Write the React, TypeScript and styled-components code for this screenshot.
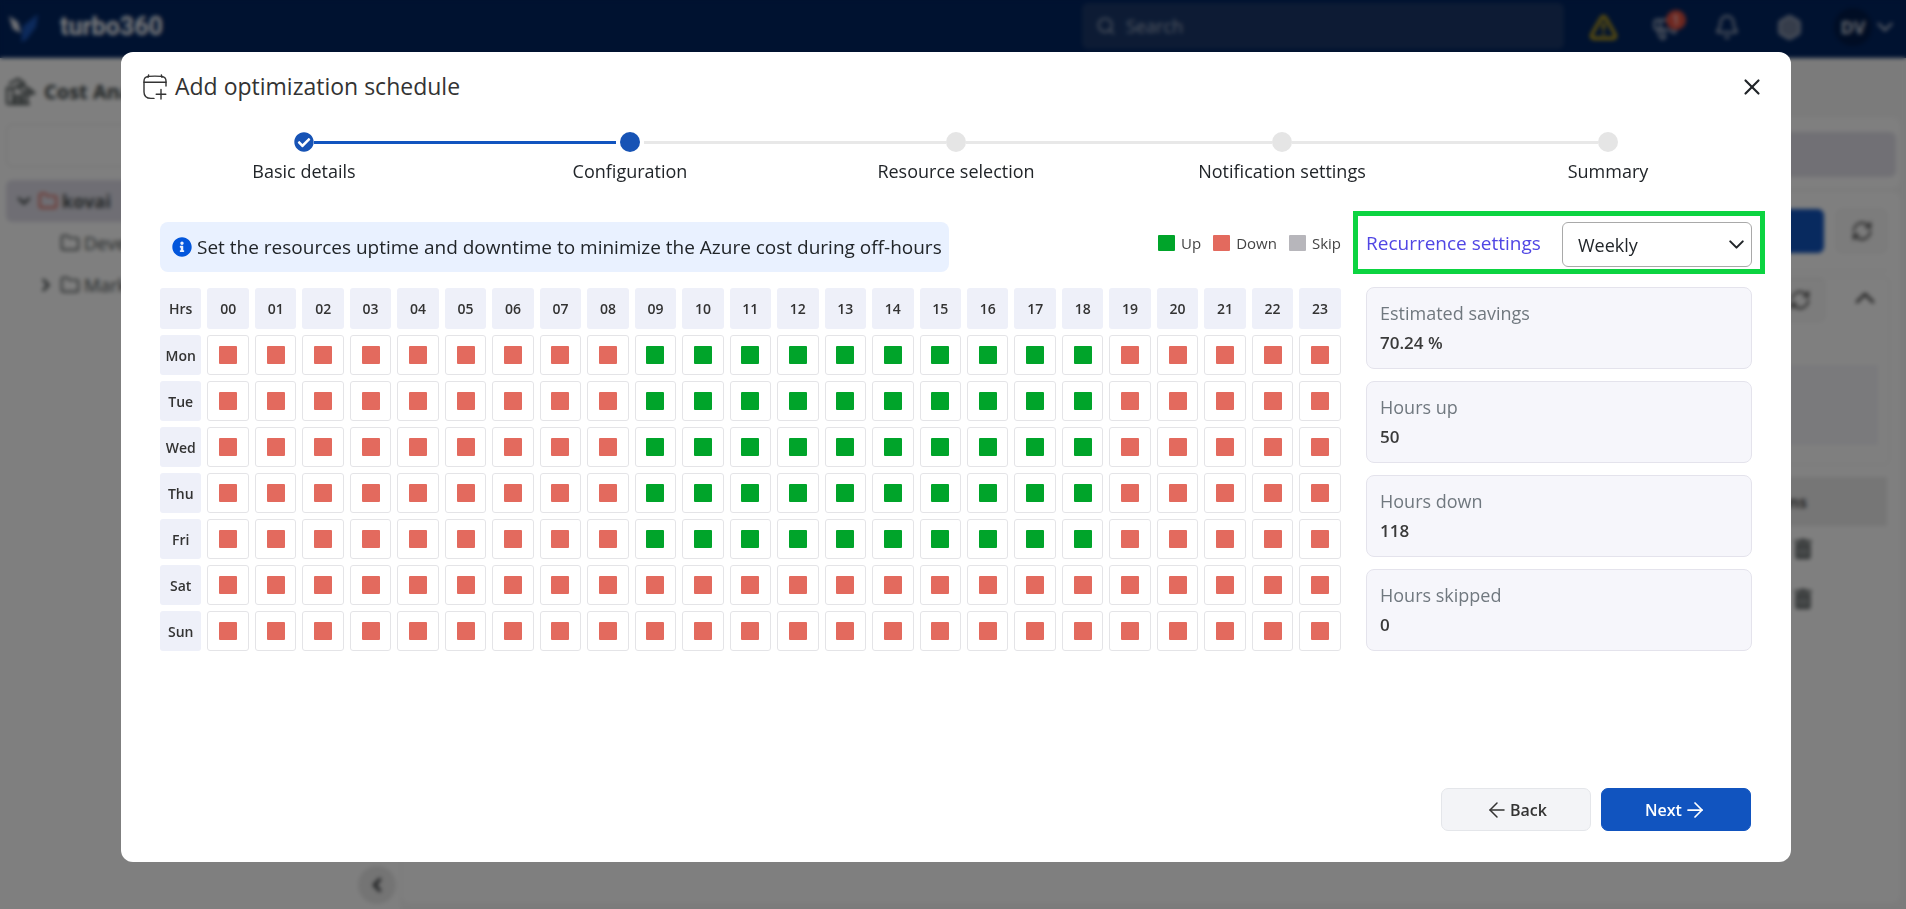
import React, { useState } from "react";
import styled, { createGlobalStyle, css } from "styled-components";
import {
  ArrowLeft,
  ArrowRight,
  Bell,
  ChevronDown,
  ChevronLeft,
  ChevronRight,
  ChevronUp,
  Folder,
  Hexagon,
  Megaphone,
  RefreshCw,
  Search,
  TriangleAlert,
  X,
} from "lucide-react";
import { FaCheckCircle, FaInfoCircle, FaTrashAlt } from "react-icons/fa";

const GlobalStyle = createGlobalStyle`
  *, *::before, *::after { box-sizing: border-box; }
  body {
    margin: 0;
    background: #fff;
    color: #212529;
    font-family: "Open Sans", "Noto Sans", sans-serif;
    font-size: 18px;
  }
  button, input, select { font: inherit; color: inherit; }
`;

/* ---------- Application page behind the dialog ---------- */

const Page = styled.div`
  height: 100vh;
  display: flex;
  flex-direction: column;
  overflow: hidden;
  background: #f7f7f7;
`;

const TopBar = styled.header`
  flex: none;
  height: 58px;
  padding: 0 8px;
  display: flex;
  align-items: center;
  background: #002460;
  color: #fff;
`;

const Brand = styled.span`
  margin-left: 20px;
  padding-bottom: 4px;
  font: 700 25px/30px Roboto, sans-serif;
`;

const SearchBox = styled.label`
  width: 482px;
  height: 46px;
  margin: 0 8px 6px auto;
  padding: 0 14px;
  display: flex;
  align-items: center;
  gap: 8px;
  border-radius: 6px;
  background: #1a3769;
  color: #a3aec2;

  input {
    flex: 1;
    min-width: 0;
    border: 0;
    background: none;
  }
  input::placeholder {
    color: #a3aec2;
  }
`;

const TopIcon = styled.button<{ $tone?: string }>`
  position: relative;
  width: 62px;
  height: 46px;
  margin-bottom: 4px;
  padding: 0;
  display: grid;
  place-items: center;
  border: 0;
  background: none;
  color: ${(p) => p.$tone ?? "#a3aec2"};
`;

const Badge = styled.span`
  position: absolute;
  top: 6px;
  right: 10px;
  width: 20px;
  height: 20px;
  border-radius: 50%;
  background: #e05040;
  color: #fff;
  font-size: 14px;
  line-height: 20px;
`;

const Account = styled.button`
  margin-bottom: 4px;
  padding: 0 0 0 14px;
  display: flex;
  align-items: center;
  gap: 0;
  border: 0;
  background: none;
  color: #c8cedb;
`;

const Avatar = styled.span`
  width: 38px;
  height: 38px;
  border-radius: 50%;
  background: #001a48;
  font-size: 18px;
  font-weight: 700;
  line-height: 38px;
  text-align: center;
`;

const Workspace = styled.div`
  flex: 1;
  min-height: 0;
  display: flex;
`;

const Sidebar = styled.aside`
  width: 400px;
  padding: 10px 4px 5px 6px;
  display: flex;
  flex-direction: column;
  background: #fff;
`;

const SidebarTitle = styled.div`
  height: 46px;
  margin-bottom: 10px;
  display: flex;
  align-items: center;
  gap: 8px;
  color: #3a4344;
  font-size: 20px;
  font-weight: 700;
`;

const Filter = styled.input`
  height: 43px;
  margin-bottom: 13px;
  border: 1px solid #e6e6e6;
  border-radius: 6px;
  background: none;
`;

const TreeRow = styled.button<{ $depth: number; $selected?: boolean }>`
  height: 42px;
  padding: 0 0 0 ${(p) => 8 + p.$depth * 22}px;
  display: flex;
  align-items: center;
  gap: 4px;
  border: 0;
  border-radius: 6px;
  background: ${(p) => (p.$selected ? "#dedde8" : "none")};
  color: #4a5152;
  font-weight: ${(p) => (p.$selected ? 700 : 400)};
`;

const Spacer = styled.span`
  width: 20px;
`;

const Collapse = styled.button`
  width: 38px;
  height: 38px;
  margin: auto 0 0 auto;
  padding: 0;
  display: grid;
  place-items: center;
  border: 0;
  border-radius: 50%;
  background: #e8e8e8;
`;

const Content = styled.main`
  flex: 1;
  padding: 60px 6px 6px 2px;
  display: flex;
  flex-direction: column;
  gap: 4px;
`;

const Panel = styled.section<{ $grow?: boolean }>`
  flex: ${(p) => (p.$grow ? 1 : "none")};
  padding: ${(p) => (p.$grow ? "17px 13px 24px" : "14px 4px 11px")};
  border-radius: 8px;
  background: #fff;
`;

const Banner = styled.div`
  height: 45px;
  border-radius: 6px;
  background: #e2e1ea;
`;

const Actions = styled.div`
  height: 62px;
  display: flex;
  justify-content: flex-end;
  gap: 12px;
  border-bottom: 1px solid #eee;
`;

const PageButton = styled.button<{ $primary?: boolean }>`
  width: ${(p) => (p.$primary ? "140px" : "51px")};
  height: 44px;
  padding: 0;
  display: grid;
  place-items: center;
  border: 1px solid ${(p) => (p.$primary ? "#1154bf" : "#eee")};
  border-radius: 6px;
  background: ${(p) => (p.$primary ? "#1154bf" : "#f8f8f8")};
  color: #444;
`;

const SummaryCard = styled.div`
  height: 188px;
  margin: 6px -3px 12px;
  border: 1px solid #f0f0f0;
  border-radius: 6px;
`;

const SummaryHead = styled.div`
  height: 87px;
  padding-right: 8px;
  display: flex;
  justify-content: flex-end;
  gap: 24px;

  > svg {
    margin-top: 4px;
  }
`;

const SummaryBlock = styled.div`
  height: 80px;
  margin: 0 11px;
  background: #f4f4f9;
`;

const ResourceTable = styled.table`
  width: 100%;
  border-collapse: collapse;
  text-align: right;
  color: #565d5e;

  th {
    height: 49px;
    padding: 0 80px 0 0;
    background: #ececec;
    color: #555;
    font-size: 16px;
  }
  td {
    height: 50px;
    padding: 0 74px 0 0;
    vertical-align: middle;
  }
`;

/* ---------- Dialog ---------- */

const Backdrop = styled.div`
  position: absolute;
  inset: 0;
  min-height: 100vh;
  padding: 52px 115px 47px 121px;
  display: flex;
  background: rgba(0, 0, 0, 0.5);
  backdrop-filter: blur(2px);
`;

const Dialog = styled.div`
  flex: 1;
  min-width: 0;
  padding-bottom: 31px;
  display: flex;
  flex-direction: column;
  border-radius: 12px;
  background: #fff;
`;

const DialogHeader = styled.div`
  height: 70px;
  padding: 0 26px 0 22px;
  display: flex;
  align-items: center;

  h1 {
    flex: 1;
    margin: 0 0 0 8px;
    padding-bottom: 2px;
    color: #333;
    font-size: 23px;
    font-weight: 400;
    line-height: 30px;
  }
`;

const CloseButton = styled.button`
  width: 26px;
  height: 26px;
  padding: 0;
  border: 0;
  background: none;
`;

const Steps = styled.ol`
  margin: 0;
  padding: 10px 20px 0;
  display: flex;
  list-style: none;
`;

const Step = styled.li`
  flex: 1;
  text-align: center;
  line-height: 24px;
`;

const Track = styled.div`
  margin-bottom: 7px;
  display: flex;
  align-items: center;
`;

const Line = styled.span<{ $tone: "done" | "todo" | "none" }>`
  flex: 1;
  height: 3px;
  background: ${(p) => ({ done: "#1154bf", todo: "#e8e8e8", none: "transparent" })[p.$tone]};
`;

const Dot = styled.span<{ $state: "done" | "active" | "todo" }>`
  width: 20px;
  height: 20px;
  display: flex;
  border-radius: 50%;
  color: #1753b5;
  background: ${(p) => ({ done: "#fff", active: "#1753b5", todo: "#e5e5e5" })[p.$state]};
  ${(p) =>
    p.$state === "active" &&
    css`
      margin: 0 4px;
    `}
`;

const Body = styled.div`
  padding: 39px 39px 0;
  display: grid;
  grid-template-columns: minmax(0, 1fr) 386px;
  gap: 25px;
`;

const ScheduleTop = styled.div`
  margin-bottom: 10px;
  display: flex;
  justify-content: space-between;
`;

const Info = styled.p`
  height: 50px;
  margin: 0;
  padding: 0 7px 0 12px;
  display: flex;
  align-items: center;
  gap: 5px;
  border-radius: 8px;
  background: #e9f1ff;
  font-size: 19px;
  white-space: nowrap;

  svg {
    flex: none;
    color: #0256dc;
  }
`;

const Legend = styled.ul`
  height: 42px;
  margin: 0;
  padding: 0;
  display: flex;
  align-items: center;
  gap: 12px;
  list-style: none;
  color: #444;
  font-size: 15px;
`;

const LegendItem = styled.li`
  display: flex;
  align-items: center;
  gap: 6px;
`;

type Status = "up" | "down" | "skip";
const statusColor: Record<Status, string> = { up: "#00a42a", down: "#e36a5e", skip: "#b7b6bb" };

const Swatch = styled.span<{ $status: Status; $small?: boolean }>`
  width: ${(p) => (p.$small ? 17 : 18)}px;
  height: ${(p) => (p.$small ? 16 : 18)}px;
  border-radius: 1px;
  background: ${(p) => statusColor[p.$status]};
`;

const ScheduleWrap = styled.div`
  margin: 0 -6px;
`;

const Schedule = styled.table`
  width: 100%;
  table-layout: fixed;
  border-collapse: separate;
  border-spacing: 6px;
  color: #333;
  font-size: 14px;

  th {
    height: 40px;
    padding: 0;
    border-radius: 3px;
    background: #eef0f9;
    font-weight: 600;
    text-align: center;
  }
  thead th {
    height: 41px;
  }
  td {
    height: 40px;
    padding: 0;
    border: 1px solid #e4e4e7;
    border-radius: 3px;
  }
`;

const Slot = styled.button`
  width: 100%;
  height: 38px;
  padding: 0;
  display: grid;
  place-items: center;
  border: 0;
  background: none;
`;

const Recurrence = styled.div`
  position: relative;
  height: 45px;
  margin-bottom: 20px;
  display: flex;
  align-items: center;
  justify-content: space-between;

  &::after {
    content: "";
    position: absolute;
    inset: -11px -13px -7px;
    border: 5px solid #0cd441;
    pointer-events: none;
  }

  label {
    padding-bottom: 4px;
    color: #5046e4;
    font-size: 19px;
    line-height: 24px;
  }
`;

const SelectBox = styled.div`
  position: relative;
  width: 190px;

  select {
    width: 100%;
    height: 45px;
    padding: 0 36px 0 15px;
    appearance: none;
    border: 1px solid #a9a9a9;
    border-radius: 6px;
    background: #fff;
  }
  svg {
    position: absolute;
    top: 10px;
    right: 3px;
    pointer-events: none;
  }
`;

const Stats = styled.dl`
  margin: 0;
  display: flex;
  flex-direction: column;
  gap: 12px;
`;

const Stat = styled.div`
  height: 82px;
  padding: 10px 13px;
  border: 1px solid #e4e3ec;
  border-radius: 8px;
  background: #f6f6fb;
  line-height: 30px;

  dt {
    color: #70787f;
  }
  dd {
    margin: 0;
    color: #3a3a3a;
    font-size: 17px;
    font-weight: 600;
  }
`;

const Footer = styled.div`
  margin-top: auto;
  padding: 0 40px;
  display: flex;
  justify-content: flex-end;
  gap: 10px;
`;

const FooterButton = styled.button<{ $primary?: boolean }>`
  width: 150px;
  height: 43px;
  padding: 0;
  display: flex;
  align-items: center;
  justify-content: center;
  gap: 1px;
  border: 1px solid ${(p) => (p.$primary ? "#1154bf" : "#e4e6ea")};
  border-radius: 7px;
  background: ${(p) => (p.$primary ? "#1154bf" : "#f3f4f7")};
  color: ${(p) => (p.$primary ? "#fff" : "#333")};
  font-size: 16px;
  font-weight: 600;
`;

const CalendarPlus = () => (
  <svg width="24" height="26" viewBox="0 0 24 26" fill="none" stroke="#333" strokeWidth="1.4" strokeLinecap="round" aria-hidden>
    <path d="M11 24.400H8C3 24.400 1 22.400 1 18V7C1 4 2.600 2.700 5.600 2.400C9.800 2 14.200 2 18.400 2.400C21.400 2.700 23 4 23 7V12" />
    <path d="M1 8.200H23M5.600 1L5 3.400M18.400 1L19 3.400M18 15.400V25M13.200 20.200H22.800" />
  </svg>
);

const Logo = () => (
  <svg width="32" height="30" viewBox="0 0 32 30" aria-hidden>
    <path d="M1 2L10 8L13 19L5 15Z" fill="#e8eaf0" />
    <path d="M30 0L28 13L18 26L13 28L15 12Z" fill="#1a55b8" />
  </svg>
);

const CostIcon = () => (
  <svg width="30" height="30" viewBox="0 0 30 30" fill="none" stroke="#3a4344" strokeWidth="2.200" aria-hidden>
    <path d="M1 28V12H7V28M10 28V20H14V28M17 28V16H21V28M3 8L12 3L19 8M7 12L16 9L28 17M22 12L28 17L21 19" />
    <path d="M1 28H24M12 8L15 15" />
  </svg>
);

const days = ["Mon", "Tue", "Wed", "Thu", "Fri", "Sat", "Sun"];
const hours = Array.from({ length: 24 }, (_, h) => String(h).padStart(2, "0"));
const steps = ["Basic details", "Configuration", "Resource selection", "Notification settings", "Summary"];
const order: Status[] = ["up", "down", "skip"];
const current = 1;

const lineTone = (gap: number) => {
  if (gap < 0 || gap >= steps.length - 1) return "none";
  return gap < current ? "done" : "todo";
};

export default function App() {
  const [grid, setGrid] = useState<Status[][]>(() =>
    days.map((_, d) => hours.map((_, h) => (d < 5 && h >= 9 && h <= 18 ? "up" : "down")))
  );
  const count = (s: Status) => grid.flat().filter((c) => c === s).length;
  const cycle = (d: number, h: number) =>
    setGrid((g) =>
      g.map((row, r) => row.map((c, i) => (r === d && i === h ? order[(order.indexOf(c) + 1) % 3] : c)))
    );
  const stats: [string, string | number][] = [
    ["Estimated savings", `${((count("down") / 168) * 100).toFixed(2)} %`],
    ["Hours up", count("up")],
    ["Hours down", count("down")],
    ["Hours skipped", count("skip")],
  ];

  return (
    <>
      <GlobalStyle />
      <Page aria-hidden inert>
        <TopBar>
          <Logo />
          <Brand>turbo360</Brand>
          <SearchBox>
            <Search size={20} />
            <input placeholder="Search" aria-label="Search" />
          </SearchBox>
          <TopIcon $tone="#d8b010" aria-label="Alerts"><TriangleAlert size={29} strokeWidth={2.5} /></TopIcon>
          <TopIcon aria-label="Announcements"><Megaphone size={28} /><Badge>1</Badge></TopIcon>
          <TopIcon aria-label="Notifications"><Bell size={26} /></TopIcon>
          <TopIcon aria-label="Settings"><Hexagon size={27} fill="#6c7a96" /></TopIcon>
          <Account>
            <Avatar>DV</Avatar>
            <ChevronDown size={26} />
          </Account>
        </TopBar>
        <Workspace>
          <Sidebar>
            <SidebarTitle>
              <CostIcon />
              Cost Analysis
            </SidebarTitle>
            <Filter aria-label="Filter" />
            <TreeRow $depth={0} $selected>
              <ChevronDown size={20} strokeWidth={3} /><Folder size={20} color="#e0503c" />kovai
            </TreeRow>
            <TreeRow $depth={1}>
              <Spacer /><Folder size={20} />Development
            </TreeRow>
            <TreeRow $depth={1}>
              <ChevronRight size={20} strokeWidth={3} /><Folder size={20} />Marketing
            </TreeRow>
            <Collapse aria-label="Collapse"><ChevronLeft size={22} strokeWidth={3} /></Collapse>
          </Sidebar>
          <Content>
            <Panel><Banner /></Panel>
            <Panel $grow>
              <Actions>
                <PageButton $primary aria-label="Add" />
                <PageButton aria-label="Refresh"><RefreshCw size={22} /></PageButton>
              </Actions>
              <SummaryCard>
                <SummaryHead>
                  <PageButton aria-label="Refresh summary"><RefreshCw size={22} /></PageButton>
                  <ChevronUp size={32} color="#444" />
                </SummaryHead>
                <SummaryBlock />
              </SummaryCard>
              <ResourceTable>
                <thead><tr><th>Actions</th></tr></thead>
                <tbody>
                  <tr><td><FaTrashAlt size={20} /></td></tr>
                  <tr><td><FaTrashAlt size={20} /></td></tr>
                </tbody>
              </ResourceTable>
            </Panel>
          </Content>
        </Workspace>
      </Page>

      <Backdrop>
        <Dialog role="dialog" aria-modal="true" aria-labelledby="dialog-title">
          <DialogHeader>
            <CalendarPlus />
            <h1 id="dialog-title">Add optimization schedule</h1>
            <CloseButton aria-label="Close"><X size={26} /></CloseButton>
          </DialogHeader>

          <Steps>
            {steps.map((name, i) => {
              const state = i < current ? "done" : i === current ? "active" : "todo";
              return (
                <Step key={name} aria-current={i === current ? "step" : undefined}>
                  <Track>
                    <Line $tone={lineTone(i - 1)} />
                    <Dot $state={state}>{state === "done" && <FaCheckCircle size={20} />}</Dot>
                    <Line $tone={lineTone(i)} />
                  </Track>
                  {name}
                </Step>
              );
            })}
          </Steps>

          <Body>
            <div>
              <ScheduleTop>
                <Info>
                  <FaInfoCircle size={20} />
                  Set the resources uptime and downtime to minimize the Azure cost during off-hours
                </Info>
                <Legend>
                  <LegendItem><Swatch $small $status="up" />Up</LegendItem>
                  <LegendItem><Swatch $small $status="down" />Down</LegendItem>
                  <LegendItem><Swatch $small $status="skip" />Skip</LegendItem>
                </Legend>
              </ScheduleTop>
              <ScheduleWrap>
                <Schedule>
                  <thead>
                    <tr>
                      <th scope="col">Hrs</th>
                      {hours.map((h) => <th key={h} scope="col">{h}</th>)}
                    </tr>
                  </thead>
                  <tbody>
                    {days.map((day, d) => (
                      <tr key={day}>
                        <th scope="row">{day}</th>
                        {hours.map((h, i) => (
                          <td key={h}>
                            <Slot aria-label={`${day} ${h}:00 ${grid[d][i]}`} onClick={() => cycle(d, i)}>
                              <Swatch $status={grid[d][i]} />
                            </Slot>
                          </td>
                        ))}
                      </tr>
                    ))}
                  </tbody>
                </Schedule>
              </ScheduleWrap>
            </div>

            <div>
              <Recurrence>
                <label htmlFor="recurrence">Recurrence settings</label>
                <SelectBox>
                  <select id="recurrence" defaultValue="Weekly">
                    <option>Weekly</option>
                    <option>Monthly</option>
                  </select>
                  <ChevronDown size={25} />
                </SelectBox>
              </Recurrence>
              <Stats>
                {stats.map(([label, value]) => (
                  <Stat key={label}>
                    <dt>{label}</dt>
                    <dd>{value}</dd>
                  </Stat>
                ))}
              </Stats>
            </div>
          </Body>

          <Footer>
            <FooterButton><ArrowLeft size={24} strokeWidth={1.5} />Back</FooterButton>
            <FooterButton $primary>Next<ArrowRight size={24} strokeWidth={1.75} /></FooterButton>
          </Footer>
        </Dialog>
      </Backdrop>
    </>
  );
}
